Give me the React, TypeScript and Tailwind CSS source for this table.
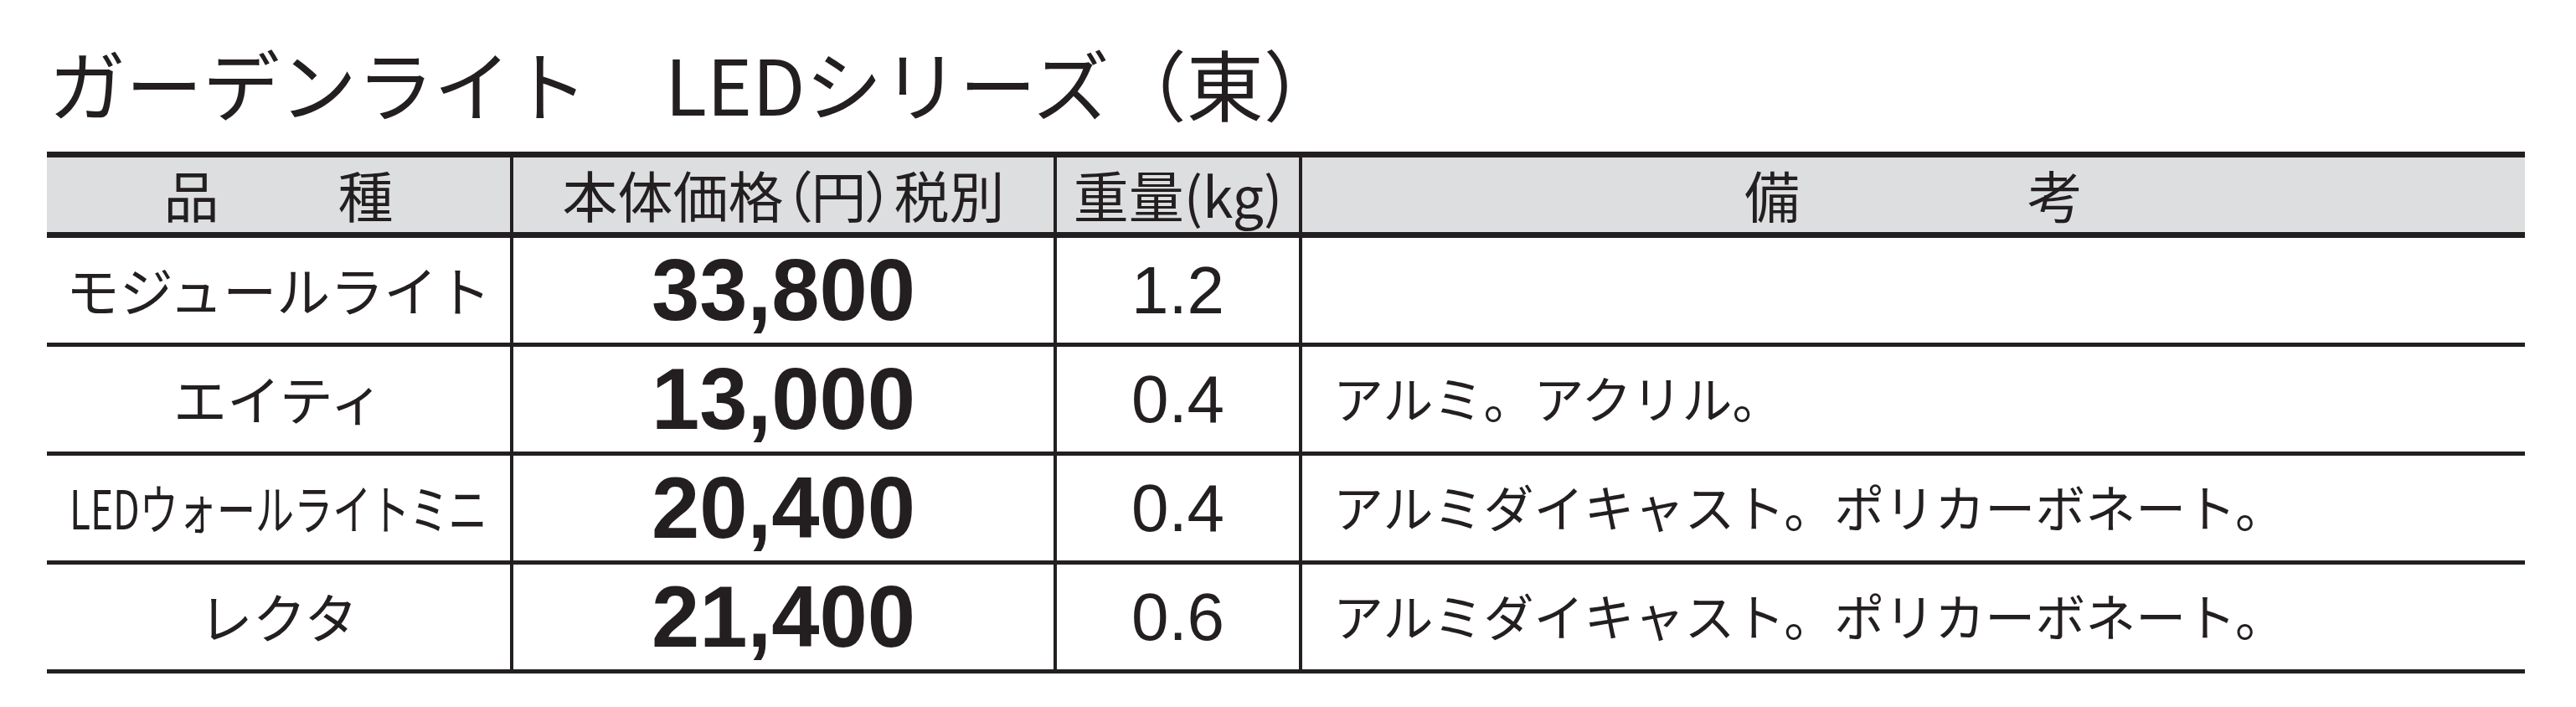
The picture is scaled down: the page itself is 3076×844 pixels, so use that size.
const rows = [
  { name: "モジュールライト", price: "33,800", weight: "1.2", note: "" },
  { name: "エイティ", price: "13,000", weight: "0.4", note: "アルミ。アクリル。" },
  {
    name: "LEDウォールライトミニ",
    price: "20,400",
    weight: "0.4",
    note: "アルミダイキャスト。ポリカーボネート。",
    condensed: true,
  },
  { name: "レクタ", price: "21,400", weight: "0.6", note: "アルミダイキャスト。ポリカーボネート。" },
];

const cols = "grid grid-cols-[553px_649px_293px_1464px]";

export default function App() {
  return (
    <div className="min-h-screen bg-white pl-[56px] pt-[52px] text-[#231f20] font-['Noto_Sans_CJK_JP',sans-serif]">
      <h1 className="pl-[2px] text-[92px] leading-none font-normal whitespace-nowrap">
        ガーデンライト　LEDシリーズ（東）
      </h1>

      <div className="mt-[37px] w-[2959px] border-t-[7px] border-[#231f20]">
        {/* header */}
        <div className={`${cols} h-[96px] border-b-[7px] border-[#231f20] bg-[#dddedf] text-[66px] leading-none`}>
          <div className="flex items-center justify-center gap-[142px] pb-[4px]">
            <span>品</span>
            <span>種</span>
          </div>
          <div className="flex items-center justify-center border-l-4 border-[#231f20] pb-[4px] [font-feature-settings:'palt']">
            本体価格（円）税別
          </div>
          <div className="flex items-center justify-center border-l-4 border-[#231f20] pb-[4px]">
            重量(kg)
          </div>
          <div className="flex items-center justify-center gap-[272px] border-l-4 border-[#231f20] pb-[4px]">
            <span>備</span>
            <span>考</span>
          </div>
        </div>

        {rows.map((row) => (
          <div key={row.name} className={`${cols} h-[130px] border-b-[5px] border-[#231f20]`}>
            <div className="flex items-center justify-center overflow-visible pb-[6px] text-[64px] leading-none whitespace-nowrap">
              {row.condensed ? (
                <span className="inline-block scale-x-[0.72]">{row.name}</span>
              ) : (
                row.name
              )}
            </div>
            <div className="flex items-center justify-center border-l-4 border-[#231f20] font-['Liberation_Sans',Arial,sans-serif] text-[103px] font-bold leading-none">
              {row.price}
            </div>
            <div className="flex items-center justify-center border-l-4 border-[#231f20] font-['Liberation_Sans',Arial,sans-serif] text-[80px] leading-none">
              {row.weight}
            </div>
            <div className="flex items-center border-l-4 border-[#231f20] pb-[6px] pl-[37px] text-[60px] leading-none whitespace-nowrap">
              {row.note}
            </div>
          </div>
        ))}
      </div>
    </div>
  );
}
